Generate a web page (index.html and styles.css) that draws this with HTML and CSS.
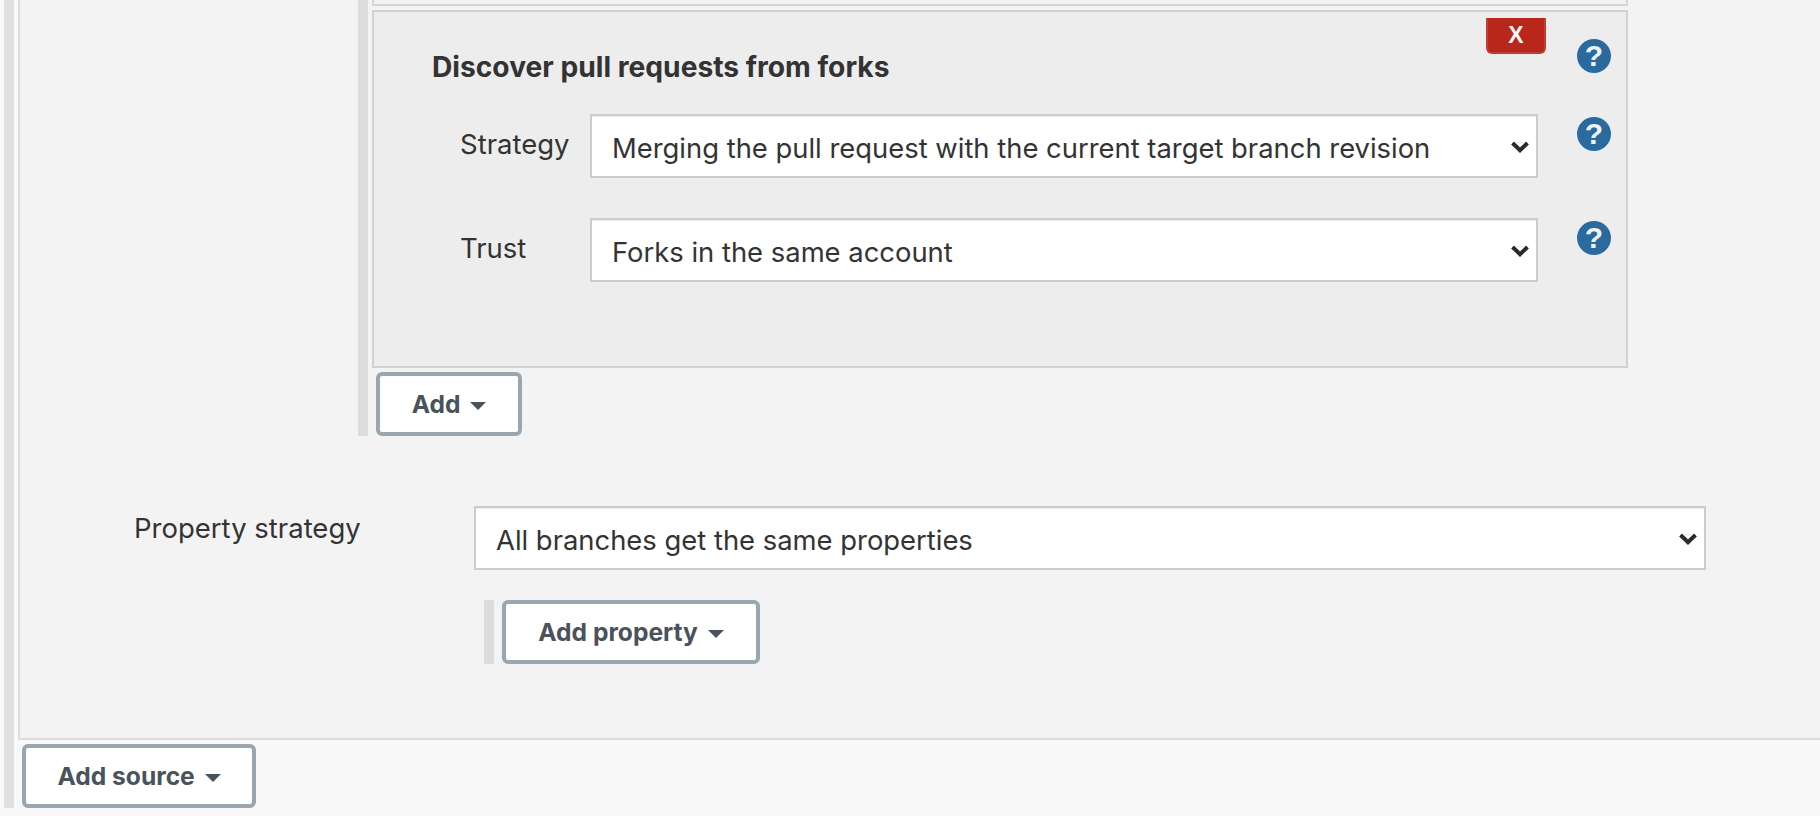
FILE: index.html
```html
<!DOCTYPE html>
<html lang="en">
<head>
  <meta charset="UTF-8" />
  <title>Branch sources</title>
  <link rel="stylesheet" href="styles.css">
</head>
<body>
  <div class="source-list">
    <div class="source-panel">
      <div class="behaviours">
        <div class="prev-box"></div>

        <div class="behaviour-box">
          <button class="delete-btn" type="button">X</button>

          <div class="title-row">
            <h4>Discover pull requests from forks</h4>
            <span class="help">?</span>
          </div>

          <div class="field-row">
            <label>Strategy</label>
            <div class="select-wrap">
              <select>
                <option>Merging the pull request with the current target branch revision</option>
              </select>
              <svg class="chevron" viewBox="0 0 18 13"><path d="M1.500 3 9 10.200 16.500 3" /></svg>
            </div>
            <span class="help">?</span>
          </div>

          <div class="field-row trust-row">
            <label>Trust</label>
            <div class="select-wrap">
              <select>
                <option>Forks in the same account</option>
              </select>
              <svg class="chevron" viewBox="0 0 18 13"><path d="M1.500 3 9 10.200 16.500 3" /></svg>
            </div>
            <span class="help">?</span>
          </div>
        </div>

        <button class="add-btn add-behaviour" type="button">Add <span class="caret"></span></button>
      </div>

      <div class="property-row">
        <label>Property strategy</label>
        <div class="select-wrap">
          <select>
            <option>All branches get the same properties</option>
          </select>
          <svg class="chevron" viewBox="0 0 18 13"><path d="M1.500 3 9 10.200 16.500 3" /></svg>
        </div>
      </div>

      <div class="property-add">
        <button class="add-btn add-property" type="button">Add property <span class="caret"></span></button>
      </div>
    </div>

    <button class="add-btn add-source" type="button">Add source <span class="caret"></span></button>
  </div>
</body>
</html>
```

FILE: styles.css
```css
* {
  box-sizing: border-box;
  margin: 0;
  padding: 0;
}

body {
  font-family: Inter, 'Liberation Sans', sans-serif;
  background: #f9f9f9;
  color: #333;
  height: 816px;
  overflow: hidden;
}

label {
  font-size: 27.500px;
  color: #333;
}

/* Outer list */
.source-list {
  margin-left: 4px;
  border-left: 10px solid #e0e0e0;
  padding-left: 4px;
  height: 808px;
}

.source-panel {
  height: 740px;
  background: #f3f3f3;
  border-left: 2px solid #dcdcdc;
  border-bottom: 2px solid #dcdcdc;
}

/* Behaviours */
.behaviours {
  width: 1270px;
  height: 436px;
  margin-left: 338px;
  border-left: 10px solid #dcdcdc;
  padding-left: 4px;
}

.prev-box {
  height: 6px;
  border: 2px solid #d6d6d6;
  border-top: none;
}

.behaviour-box {
  position: relative;
  height: 358px;
  margin-top: 4px;
  padding: 27px 15px 0 58px;
  background: #ededed;
  border: 2px solid #d2d2d2;
}

.delete-btn {
  position: absolute;
  top: 6px;
  right: 80px;
  width: 60px;
  height: 36px;
  background: #b9271a;
  color: #f5f5f5;
  border: 2px solid #bf3f33;
  border-top: none;
  border-radius: 0 0 6px 6px;
  font-family: 'Liberation Sans', sans-serif;
  font-size: 23px;
  font-weight: bold;
}

.title-row {
  display: flex;
  justify-content: space-between;
  height: 34px;
}

h4 {
  font-size: 28.200px;
  font-weight: bold;
  color: #333;
  line-height: 56px;
}

.field-row {
  display: flex;
  margin: 41px 0 0 28px;
}

.trust-row {
  margin-top: 40px;
}

.field-row label {
  width: 130px;
  line-height: 60px;
}

.field-row .select-wrap {
  width: 948px;
}

.field-row .help {
  margin: 3px 0 0 39px;
}

/* Help icon */
.help {
  flex: none;
  width: 34px;
  height: 34px;
  border-radius: 50%;
  background: #2a6a9e;
  color: #f2f2f2;
  font-family: 'Liberation Sans', sans-serif;
  font-size: 30px;
  font-weight: bold;
  line-height: 34px;
  text-align: center;
}

/* Selects */
.select-wrap {
  position: relative;
  flex: none;
  height: 64px;
}

select {
  appearance: none;
  width: 100%;
  height: 100%;
  padding: 4px 20px 0;
  background: #fff;
  border: 2px solid #ccc;
  border-radius: 0;
  box-shadow: inset 0 1px 1px rgba(0, 0, 0, 0.075);
  font-family: Inter, 'Liberation Sans', sans-serif;
  font-size: 27.400px;
  color: #333;
}

.chevron {
  position: absolute;
  top: 26px;
  right: 9px;
  width: 18px;
  height: 13px;
  overflow: visible;
  fill: none;
  stroke: #2b2b2b;
  stroke-width: 4;
}

/* Property strategy */
.property-row {
  display: flex;
  margin-top: 70px;
  padding-left: 114px;
}

.property-row label {
  width: 340px;
  line-height: 44px;
}

.property-row .select-wrap {
  width: 1232px;
}

.property-add {
  margin: 30px 0 0 464px;
  border-left: 10px solid #dcdcdc;
  padding-left: 8px;
}

/* Add buttons */
.add-btn {
  display: block;
  height: 64px;
  background: #fff;
  border: 4px solid #9aa7ae;
  border-radius: 6px;
  font-family: Inter, 'Liberation Sans', sans-serif;
  font-size: 24.600px;
  font-weight: bold;
  color: #4a525b;
  white-space: nowrap;
}

.add-behaviour {
  width: 146px;
  margin: 4px 0 0 4px;
}

.add-property {
  width: 258px;
}

.add-source {
  width: 234px;
  margin: 4px 0 0 4px;
}

.caret {
  display: inline-block;
  width: 0;
  height: 0;
  margin-left: 4px;
  vertical-align: 3px;
  border-left: 8px solid transparent;
  border-right: 8px solid transparent;
  border-top: 8px solid #4a525b;
}
```
